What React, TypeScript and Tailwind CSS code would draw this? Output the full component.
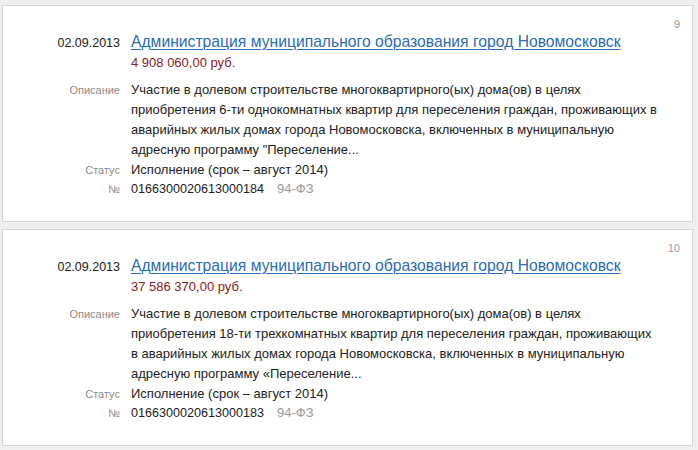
const items = [
  {
    n: 9,
    date: '02.09.2013',
    org: 'Администрация муниципального образования город Новомосковск',
    price: '4 908 060,00 руб.',
    desc: [
      'Участие в долевом строительстве многоквартирного(ых) дома(ов) в целях',
      'приобретения 6-ти однокомнатных квартир для переселения граждан, проживающих в',
      'аварийных жилых домах города Новомосковска, включенных в муниципальную',
      'адресную программу "Переселение...',
    ],
    status: 'Исполнение (срок – август 2014)',
    num: '0166300020613000184',
    law: '94-ФЗ',
  },
  {
    n: 10,
    date: '02.09.2013',
    org: 'Администрация муниципального образования город Новомосковск',
    price: '37 586 370,00 руб.',
    desc: [
      'Участие в долевом строительстве многоквартирного(ых) дома(ов) в целях',
      'приобретения 18-ти трехкомнатных квартир для переселения граждан, проживающих',
      'в аварийных жилых домах города Новомосковска, включенных в муниципальную',
      'адресную программу «Переселение...',
    ],
    status: 'Исполнение (срок – август 2014)',
    num: '0166300020613000183',
    law: '94-ФЗ',
  },
];

function Row({
  label,
  children,
  labelClass,
  className = '',
}: {
  label: string;
  children: React.ReactNode;
  labelClass: string;
  className?: string;
}) {
  return (
    <div className={`flex items-baseline gap-[11px] ${className}`}>
      <div className={`w-[117px] shrink-0 text-right ${labelClass}`}>{label}</div>
      <div className="min-w-0 flex-1">{children}</div>
    </div>
  );
}

const small = 'text-[11px] text-[#8a8a8a]';

function Card({ it }: { it: (typeof items)[number] }) {
  return (
    <div className="relative h-[217px] border border-[#d6d6d6] bg-white pt-[26px] pr-[30px] text-[13px] text-[#222]">
      <span className="absolute right-[12px] top-[10px] text-[11px] leading-[16px] text-[#999]">{it.n}</span>
      <Row label={it.date} labelClass="text-[12.5px] leading-[19px]">
        <a href="#" className="block text-[15.7px] leading-[19px] text-[#2a6cb2] underline underline-offset-2 decoration-1">
          {it.org}
        </a>
      </Row>
      <Row label="" labelClass="leading-[19px]">
        <div className="leading-[19px] text-[#8b1a1a]">{it.price}</div>
      </Row>
      <Row label="Описание" labelClass={`${small} leading-[20px]`} className="mt-[8px]">
        <div className="leading-[20px]">
          {it.desc.map((line) => (
            <div key={line} className="whitespace-nowrap">
              {line}
            </div>
          ))}
        </div>
      </Row>
      <Row label="Статус" labelClass={`${small} leading-[19px]`}>
        <div className="leading-[19px]">{it.status}</div>
      </Row>
      <Row label="№" labelClass={`${small} leading-[18px]`}>
        <div className="leading-[18px]">
          <span className="text-[12.6px]">{it.num}</span>
          <span className="ml-[13px] text-[#999]">{it.law}</span>
        </div>
      </Row>
    </div>
  );
}

export default function App() {
  return (
    <div className="h-[450px] overflow-hidden bg-[#efefef] pl-[2px] pr-[5px] pt-[5px] font-['Liberation_Sans',Arial,sans-serif]">
      <div className="flex flex-col gap-[7px]">
        {items.map((it) => (
          <Card key={it.n} it={it} />
        ))}
      </div>
    </div>
  );
}
